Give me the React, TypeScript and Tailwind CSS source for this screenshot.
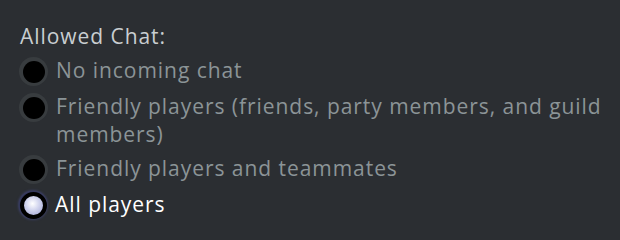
const options = [
  { id: 'none', label: 'No incoming chat' },
  { id: 'friendly', label: 'Friendly players (friends, party members, and guild members)' },
  { id: 'team', label: 'Friendly players and teammates' },
  { id: 'all', label: 'All players' },
];

function Radio({ checked }: { checked: boolean }) {
  if (checked) {
    return (
      <span className="mt-[1px] flex h-[28px] w-[28px] shrink-0 items-center justify-center rounded-full bg-[#34375a] shadow-[0_0_3px_#4d5299]">
        <span className="h-[27px] w-[27px] rounded-full border-[4px] border-black bg-[radial-gradient(circle_at_45%_40%,#ffffff_0%,#d4d7ef_40%,#9a9fd2_100%)]" />
      </span>
    );
  }
  return (
    <span className="mt-[1px] flex h-[29px] w-[29px] shrink-0 items-center justify-center rounded-full bg-[#383c3f]">
      <span className="h-[22px] w-[22px] rounded-full bg-black" />
    </span>
  );
}

export default function App() {
  const selected = 'all';

  return (
    <div className="h-[240px] w-[620px] bg-[#2b2e32] pl-5 pr-3 pt-[22px] font-['Open_Sans',sans-serif] text-[21px] leading-[28px] tracking-[0.95px]">
      <div className="mb-[6px] text-[#c9ced1]">Allowed Chat:</div>
      <div className="flex flex-col gap-[6px]">
        {options.map((o) => (
          <label key={o.id} className="-ml-[1px] flex items-start gap-[8px]">
            <Radio checked={o.id === selected} />
            <span className={o.id === selected ? 'text-white' : 'text-[#8b9497]'}>{o.label}</span>
          </label>
        ))}
      </div>
    </div>
  );
}
